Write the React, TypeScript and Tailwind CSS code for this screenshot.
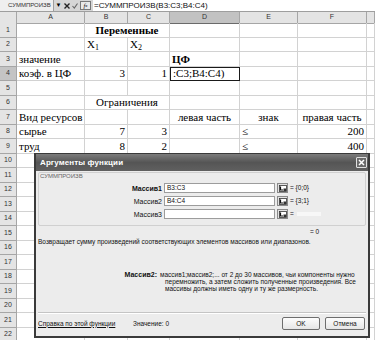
import React from 'react';

type Cell = { t: React.ReactNode; a?: 'l' | 'r' | 'c'; b?: boolean; span?: boolean } | null | 'active';

const Sub = ({ n }: { n: string }) => (
  <>
    X<span className="text-[8px] relative top-[2px]">{n}</span>
  </>
);

const rows: Record<number, Cell[]> = {
  1: [null, { t: 'Переменные', a: 'c', b: true, span: true }, null, null, null, null],
  2: [null, { t: <Sub n="1" /> }, { t: <Sub n="2" /> }, null, null, null, null],
  3: [{ t: 'значение' }, null, null, { t: 'ЦФ', b: true }, null, null, null],
  4: [{ t: 'коэф. в ЦФ' }, { t: '3', a: 'r' }, { t: '1', a: 'r' }, 'active', null, null, null],
  6: [null, { t: 'Ограничения', a: 'c', span: true }, null, null, null, null],
  7: [{ t: 'Вид ресурсов' }, null, null, { t: 'левая часть', a: 'c' }, { t: 'знак', a: 'c' }, { t: 'правая часть', a: 'c' }, null],
  8: [{ t: 'сырье' }, { t: '7', a: 'r' }, { t: '3', a: 'r' }, null, { t: '≤' }, { t: '200', a: 'r' }, null],
  9: [{ t: 'труд' }, { t: '8', a: 'r' }, { t: '2', a: 'r' }, null, { t: '≤' }, { t: '400', a: 'r' }, null],
};

function Row({ n }: { n: number }) {
  const cells = rows[n] ?? [null, null, null, null, null, null, null];
  return (
    <div className="grid grid-cols-[17px_68px_43px_42px_70px_58px_69px_1fr] h-[14.5px]">
      <div
        className={`${n === 4 ? 'bg-[#c4c4c4]' : 'bg-[#e4e4e4]'} border-r border-b border-[#a6a6a6] flex items-center justify-center font-['Liberation_Sans',sans-serif] text-[7px] text-[#333]`}
      >
        {n}
      </div>
      {cells.map((c, i) => {
        if (c === 'active') {
          // ячейка в режиме правки: видна только конец формулы
          return (
            <div key={i} className="border border-[#1a1a1a] flex items-end pl-[2px] pb-[1px] leading-none whitespace-nowrap">
              :C3;B4:C4)
            </div>
          );
        }
        const align = c?.a === 'r' ? 'justify-end' : c?.a === 'c' ? 'justify-center' : 'justify-start';
        return (
          <div
            key={i}
            className={`${c?.span ? 'col-span-2' : ''} border-r border-b border-[#d2d2d2] flex items-end ${align} px-[2px] pb-[1px] leading-none whitespace-nowrap ${c?.b ? 'font-bold' : ''}`}
          >
            {c?.t}
          </div>
        );
      })}
    </div>
  );
}

function RefButton() {
  return (
    <div className="w-[11px] h-[10px] ml-[2px] bg-[#e2e2e2] border border-[#8a8a8a] flex items-center justify-center">
      <svg width="8" height="7" viewBox="0 0 8 7">
        <rect x="0.5" y="0.5" width="7" height="6" fill="#fff" stroke="#333" strokeWidth="0.8" />
        <path d="M1.5 1.5 V5 H4" stroke="#111" strokeWidth="1.2" fill="none" />
        <rect x="4.5" y="3.5" width="2.5" height="2.5" fill="#333" />
      </svg>
    </div>
  );
}

function ArgRow({ label, value, result, bold }: { label: string; value: string; result: React.ReactNode; bold?: boolean }) {
  return (
    <div className="flex items-center h-[10px]">
      <div className={`w-[123px] text-right text-[7px] leading-none ${bold ? 'font-bold' : ''}`}>{label}</div>
      <div className="w-[111px] h-[10px] ml-[2px] bg-white border border-[#9c9c9c] text-[6.5px] leading-none flex items-center pl-[2px]">
        {value}
      </div>
      <RefButton />
      <div className="ml-[2px] text-[6.5px] leading-none flex items-center gap-[3px]">{result}</div>
    </div>
  );
}

export default function App() {
  return (
    <div className="w-[375px] h-[340px] relative overflow-hidden bg-white font-['Liberation_Serif',serif] text-[11px] text-black">
      {/* строка формул */}
      <div className="h-[12px] flex bg-[#d6d6d6] border-b border-[#9e9e9e] font-['Liberation_Sans',sans-serif]">
        <div className="w-[54px] bg-[#efefef] border-r border-[#9e9e9e] text-[6px] flex items-center pl-[8px] text-[#333]">
          СУММПРОИЗВ
        </div>
        <div className="w-[9px] flex items-center justify-center text-[6px]">▼</div>
        <div className="w-[8px] flex items-center justify-center">
          <svg width="6" height="6" viewBox="0 0 6 6">
            <path d="M0.5 0.5 L5.5 5.5 M5.5 0.5 L0.5 5.5" stroke="#222" strokeWidth="1.4" />
          </svg>
        </div>
        <div className="w-[8px] flex items-center justify-center">
          <svg width="6" height="6" viewBox="0 0 6 6">
            <path d="M0.5 3 L2.3 5 L5.5 0.5" stroke="#666" strokeWidth="1.1" fill="none" />
          </svg>
        </div>
        <div className="w-[11px] my-[1px] ml-[1px] border border-[#777] bg-[#e8e8e8] flex items-center justify-center font-['Liberation_Serif',serif] italic text-[6.5px]">
          f<span className="text-[5px]">x</span>
        </div>
        <div className="flex-1 bg-white ml-[2px] text-[8px] flex items-center pl-[1px] text-[#111]">=СУММПРОИЗВ(B3:C3;B4:C4)</div>
      </div>

      {/* заголовки столбцов */}
      <div className="grid grid-cols-[17px_68px_43px_42px_70px_58px_69px_1fr] h-[11px] font-['Liberation_Sans',sans-serif] text-[7px] text-[#333]">
        <div className="bg-[#e4e4e4] border-r border-b border-[#a6a6a6]" />
        {['A', 'B', 'C', 'D', 'E', 'F', ''].map((l) => (
          <div
            key={l}
            className={`${l === 'D' ? 'bg-[#c2c2c2] border-b-[#6a6a6a]' : 'bg-[#e4e4e4]'} border-r border-b border-[#a6a6a6] flex items-center justify-center`}
          >
            {l}
          </div>
        ))}
      </div>

      {Array.from({ length: 22 }, (_, i) => (
        <Row key={i} n={i + 1} />
      ))}

      {/* диалог */}
      <div className="absolute left-[34px] top-[153px] w-[336px] h-[185px] bg-[#ececec] border-2 border-t border-[#3a3a3a] flex flex-col font-['Liberation_Sans',sans-serif] text-[#111]">
        <div className="h-[17px] shrink-0 bg-gradient-to-b from-[#7c7c7c] via-[#555555] to-[#606060] flex items-center justify-between pl-[4px] pr-[1px]">
          <span className="text-white text-[8px] font-bold tracking-[0.1px]">Аргументы функции</span>
          <div className="w-[11px] h-[11px] bg-[#6a6a6a] border border-[#e0e0e0] rounded-[1px] flex items-center justify-center">
            <svg width="7" height="7" viewBox="0 0 7 7">
              <path d="M1 1 L6 6 M6 1 L1 6" stroke="#fff" strokeWidth="1.5" />
            </svg>
          </div>
        </div>

        <div className="flex-1 flex flex-col px-[2px]">
          <div className="mt-[1px] h-[54px] border border-[#d0d0d0] rounded-[2px]">
            <div className="text-[6px] leading-[7px] text-[#666] pl-[1px]">СУММПРОИЗВ</div>
            <div className="mt-[3px] flex flex-col gap-[3px]">
              <ArgRow label="Массив1" value="B3:C3" result="= {0;0}" bold />
              <ArgRow label="Массив2" value="B4:C4" result="= {3;1}" />
              <ArgRow
                label="Массив3"
                value=""
                result={
                  <>
                    =<span className="w-[24px] h-[4px] bg-[#f7f7f7]" />
                  </>
                }
              />
            </div>
          </div>

          <div className="mt-[1px] ml-[272px] text-[6.5px] leading-[9px]">= 0</div>
          <div className="mt-[2px] text-[6.5px] leading-[7px] whitespace-nowrap">
            Возвращает сумму произведений соответствующих элементов массивов или диапазонов.
          </div>

          <div className="mt-[26px] flex text-[6.5px] leading-[7px] whitespace-nowrap">
            <div className="w-[119px] text-right font-bold text-[7px]">Массив2:</div>
            <div className="ml-[3px]">
              <div>массив1;массив2;... от 2 до 30 массивов, чьи компоненты нужно</div>
              <div className="pl-[5px]">перемножить, а затем сложить полученные произведения. Все</div>
              <div className="pl-[5px]">массивы должны иметь одну и ту же размерность.</div>
            </div>
          </div>

          <div className="mt-auto border-t border-[#c4c4c4] shadow-[0_1px_0_#fff]" />
          <div className="h-[23px] flex items-center text-[6.5px] pb-[2px]">
            <span className="w-[95px] underline">Справка по этой функции</span>
            <span>Значение: 0</span>
            <div className="ml-auto flex gap-[5px] pr-[1px]">
              <div className="w-[38px] h-[13px] bg-gradient-to-b from-[#fdfdfd] to-[#e6e6e6] border border-[#6e6e6e] rounded-[2px] flex items-center justify-center">
                OK
              </div>
              <div className="w-[40px] h-[13px] bg-gradient-to-b from-[#fdfdfd] to-[#e6e6e6] border border-[#6e6e6e] rounded-[2px] flex items-center justify-center">
                Отмена
              </div>
            </div>
          </div>
        </div>
      </div>
    </div>
  );
}
